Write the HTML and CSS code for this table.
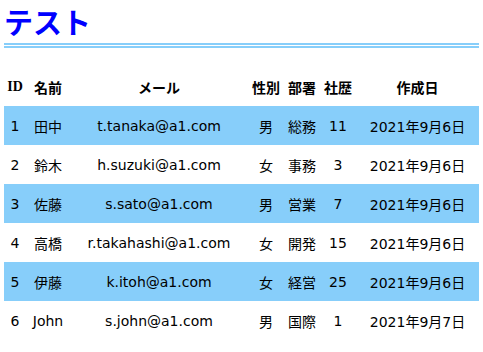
FILE: index.html
```html
<!DOCTYPE html>
<html lang="ja">
<head>
<meta charset="utf-8">
<title>テスト</title>
<link rel="stylesheet" href="styles.css">
</head>
<body>
<h1 class="title">テスト</h1>
<table class="list">
  <colgroup>
    <col class="c-id">
    <col class="c-name">
    <col class="c-mail">
    <col class="c-short">
    <col class="c-short">
    <col class="c-short">
    <col class="c-date">
  </colgroup>
  <thead>
    <tr><th>ID</th><th>名前</th><th>メール</th><th>性別</th><th>部署</th><th>社歴</th><th>作成日</th></tr>
  </thead>
  <tbody>
    <tr><td>1</td><td>田中</td><td>t.tanaka@a1.com</td><td>男</td><td>総務</td><td>11</td><td>2021年9月6日</td></tr>
    <tr><td>2</td><td>鈴木</td><td>h.suzuki@a1.com</td><td>女</td><td>事務</td><td>3</td><td>2021年9月6日</td></tr>
    <tr><td>3</td><td>佐藤</td><td>s.sato@a1.com</td><td>男</td><td>営業</td><td>7</td><td>2021年9月6日</td></tr>
    <tr><td>4</td><td>高橋</td><td>r.takahashi@a1.com</td><td>女</td><td>開発</td><td>15</td><td>2021年9月6日</td></tr>
    <tr><td>5</td><td>伊藤</td><td>k.itoh@a1.com</td><td>女</td><td>経営</td><td>25</td><td>2021年9月6日</td></tr>
    <tr><td>6</td><td>John</td><td>s.john@a1.com</td><td>男</td><td>国際</td><td>1</td><td>2021年9月7日</td></tr>
  </tbody>
</table>
</body>
</html>
```
FILE: styles.css
```css
html, body {
  margin: 0;
  padding: 0;
  background: #fff;
}
body {
  padding: 0 4px;
  font-family: "DejaVu Sans", "Noto Sans CJK JP", sans-serif;
  font-size: 14px;
  color: #000;
}
.title {
  margin: 0;
  padding: 0 0 1px 0;
  font-family: "Noto Sans CJK JP", sans-serif;
  font-size: 29px;
  line-height: 42px;
  font-weight: bold;
  color: #0000ff;
  border-bottom: 5px double #87cefa;
}
.list {
  width: 100%;
  table-layout: fixed;
  border-collapse: collapse;
  margin-top: 19px;
}
.c-id { width: 22px; }
.c-name { width: 44px; }
.c-mail { width: 178px; }
.c-short { width: 36px; }
.c-date { width: auto; }
.list th,
.list td {
  height: 39px;
  padding: 0;
  text-align: center;
  vertical-align: middle;
  white-space: nowrap;
}
.list th {
  font-family: "Liberation Serif", "Noto Sans CJK JP", serif;
  font-weight: bold;
}
.list tbody tr:nth-child(odd) {
  background: #87cefa;
}
```
